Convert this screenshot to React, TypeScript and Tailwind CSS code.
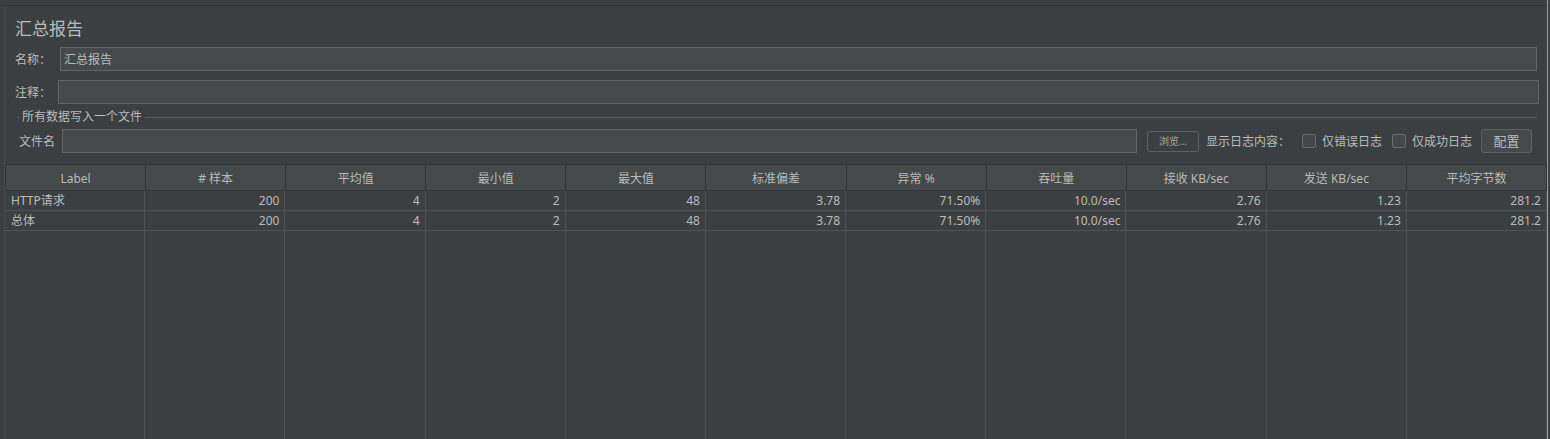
import React from 'react';

const COLUMNS = ['Label', '# 样本', '平均值', '最小值', '最大值', '标准偏差', '异常 %', '吞吐量', '接收 KB/sec', '发送 KB/sec', '平均字节数'];

const ROWS = [
  ['HTTP请求', '200', '4', '2', '48', '3.78', '71.50%', '10.0/sec', '2.76', '1.23', '281.2'],
  ['总体', '200', '4', '2', '48', '3.78', '71.50%', '10.0/sec', '2.76', '1.23', '281.2'],
];

function Checkbox({ label }: { label: string }) {
  return (
    <div className="flex items-center">
      <span className="w-[14px] h-[14px] border border-[#6b6b6b] bg-[#43494a] rounded-[2px]" />
      <span className="ml-[6px] pt-[2px]">{label}</span>
    </div>
  );
}

export default function App() {
  return (
    <div className="w-[1550px] h-[439px] bg-[#3c3f41] overflow-hidden flex text-[12px] text-[#bbbbbb] font-[family-name:'Noto_Sans','Noto_Sans_CJK_SC',sans-serif]">
      <div className="w-[1547px] flex flex-col">
        <div className="h-[5px]" />
        <div className="flex-1 border-t border-[#313335] flex min-h-0">
          <div className="w-[4px]" />
          <div className="flex-1 border-l border-[#4a4b4c] flex flex-col min-h-0">
            {/* title */}
            <div className="h-[41px] pt-[13px] pl-[10px] text-[17px] leading-[20px]">汇总报告</div>

            {/* name */}
            <div className="h-[24px] flex items-center">
              <span className="w-[55px] pl-[10px] pt-[2px]">名称：</span>
              <div className="flex-1 h-[24px] mr-[10px] border border-[#646464] bg-[#45494a] pl-[3px] pt-[2px] flex items-center">
                汇总报告
              </div>
            </div>

            {/* comment */}
            <div className="h-[24px] mt-[9px] flex items-center">
              <span className="w-[53px] pl-[10px] pt-[2px]">注释：</span>
              <div className="flex-1 h-[24px] mr-[8px] border border-[#646464] bg-[#45494a]" />
            </div>

            {/* group title */}
            <div className="h-[26px] flex items-center pl-[12px] mr-[10px]">
              <span className="w-[3px] h-px bg-[#5a5d5f]" />
              <span className="ml-[2px] mr-[3px]">所有数据写入一个文件</span>
              <span className="flex-1 h-px bg-[#5a5d5f]" />
            </div>

            {/* file row */}
            <div className="h-[24px] -mt-px flex items-center">
              <span className="w-[57px] pl-[14px] pt-[2px]">文件名</span>
              <div className="w-[1075px] h-[24px] border border-[#646464] bg-[#45494a]" />
              <button className="ml-[10px] w-[52px] h-[21px] border border-[#5e6060] rounded-[3px] bg-[#3c3f41] text-[10px] text-[#a8a8a8] flex items-center justify-center">
                浏览...
              </button>
              <span className="ml-[7px] mr-[12px] pt-[2px]">显示日志内容：</span>
              <Checkbox label="仅错误日志" />
              <div className="ml-[10px]">
                <Checkbox label="仅成功日志" />
              </div>
              <button className="ml-auto mr-[15px] w-[51px] h-[24px] border border-[#5e6060] rounded-[3px] bg-[#45494a] text-[13px] pt-[2px] flex items-center justify-center">
                配置
              </button>
            </div>

            {/* table */}
            <div className="mt-[11px] flex-1 flex flex-col min-h-0">
              <div className="grid grid-cols-11 h-[27px] bg-[#45494a] border-y border-[#313335] border-l">
                {COLUMNS.map((c) => (
                  <div key={c} className="border-r border-[#313335] pt-[2px] flex items-center justify-center">
                    {c}
                  </div>
                ))}
              </div>
              {ROWS.map((row, r) => (
                <div key={r} className="grid grid-cols-11 h-[20px] border-b border-[#505355]">
                  {row.map((v, i) => (
                    <div
                      key={i}
                      className={`border-r border-[#505355] flex items-center ${i === 0 ? 'pl-[6px]' : 'justify-end pr-[5px]'}`}
                    >
                      {v}
                    </div>
                  ))}
                </div>
              ))}
              <div className="grid grid-cols-11 flex-1">
                {COLUMNS.map((c) => (
                  <div key={c} className="border-r border-[#505355]" />
                ))}
              </div>
            </div>
          </div>
        </div>
      </div>
      <div className="w-px bg-[#9a9a9a]" />
      <div className="w-[2px] bg-[#3c3f41]" />
    </div>
  );
}
